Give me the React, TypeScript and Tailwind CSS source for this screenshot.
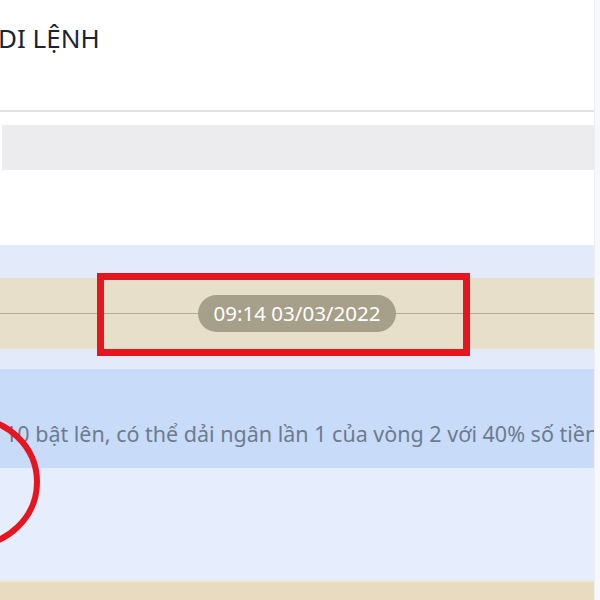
import React from 'react';

const font = { fontFamily: '"Noto Sans", "Open Sans", sans-serif' };

function Header() {
  return (
    <div className="h-[110px] bg-white pt-[20px]">
      <h1 className="ml-[-2px] text-[26px] leading-[36px] font-[450] text-[#1b2435]">DI LỆNH</h1>
    </div>
  );
}

function TimeDivider({ time }: { time: string }) {
  return (
    <div className="h-[71px] bg-[#e7dfca] flex items-center">
      <div className="flex-1 h-px bg-[#b3aa93]" />
      <div className="h-[37px] px-[16px] rounded-full bg-[#a69f8a] text-white text-[20.5px] flex items-center">
        {time}
      </div>
      <div className="flex-1 h-px bg-[#b3aa93]" />
    </div>
  );
}

export default function App() {
  return (
    <div className="relative w-[600px] h-[600px] overflow-hidden bg-white" style={font}>
      <div className="flex h-full">
        <div className="flex-1 flex flex-col min-w-0">
          <Header />
          <div className="h-[2px] bg-[#e2e2e4] shadow-[0_-4px_10px_rgba(0,0,0,0.04)]" />
          <div className="h-[13px] bg-white" />
          <div className="h-[45px] bg-[#ececee] border-l-2 border-white" />
          <div className="h-[75px] bg-white" />
          <div className="h-[33px] bg-[#e3ebfa]" />
          <TimeDivider time="09:14 03/03/2022" />
          <div className="h-[20px] bg-[#e3ebfa]" />
          <div className="h-[99px] bg-[#c8dcfa] pt-[51px] overflow-hidden">
            <p className="ml-[5px] whitespace-nowrap text-[21.5px] leading-[28px] text-[#6c7b8e]">
              10 bật lên, có thể dải ngân lần 1 của vòng 2 với 40% số tiền
            </p>
          </div>
          <div className="h-[112px] bg-[#e6edfd]" />
          <div className="flex-1 bg-[#e8dbbf] border-t-2 border-[#f1e8d6]" />
        </div>
        <div className="w-[6px] bg-[#f7f8fb] border-l border-[#eceef3]" />
      </div>

      {/* annotations */}
      <div className="absolute left-[97px] top-[273px] w-[373px] h-[83px] border-[7px] border-[#e5161f]" />
      <svg className="absolute left-0 top-0" width="600" height="600" viewBox="0 0 600 600">
        <ellipse cx="-30" cy="482" rx="67" ry="64" fill="none" stroke="#e5161f" strokeWidth="6" />
      </svg>
    </div>
  );
}
